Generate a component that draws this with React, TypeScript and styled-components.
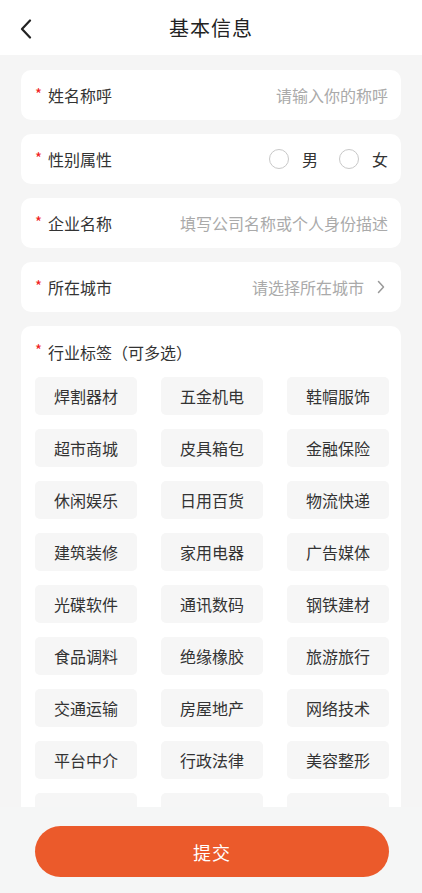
import React from "react";
import styled, { createGlobalStyle } from "styled-components";

const GlobalStyle = createGlobalStyle`
  html, body {
    margin: 0;
    padding: 0;
    background: #f5f5f5;
  }
  * {
    box-sizing: border-box;
  }
  body {
    font-family: "Noto Sans CJK SC", "Noto Sans", sans-serif;
  }
`;

const tags = [
  "焊割器材", "五金机电", "鞋帽服饰",
  "超市商城", "皮具箱包", "金融保险",
  "休闲娱乐", "日用百货", "物流快递",
  "建筑装修", "家用电器", "广告媒体",
  "光碟软件", "通讯数码", "钢铁建材",
  "食品调料", "绝缘橡胶", "旅游旅行",
  "交通运输", "房屋地产", "网络技术",
  "平台中介", "行政法律", "美容整形",
  "", "", "",
];

const Page = styled.div`
  display: flex;
  flex-direction: column;
  height: 893px;
  background: #f5f5f5;
`;

const Header = styled.header`
  position: relative;
  height: 55px;
  flex: none;
  display: flex;
  align-items: center;
  justify-content: center;
  background: #fff;
`;

const BackButton = styled.button`
  position: absolute;
  left: 14px;
  top: 17px;
  width: 24px;
  height: 24px;
  padding: 0;
  border: none;
  background: none;
  display: flex;
  align-items: center;
  justify-content: center;
`;

const Title = styled.h1`
  margin: 0;
  font-size: 20px;
  font-weight: 400;
  color: #222;
  letter-spacing: 1px;
`;

const Content = styled.main`
  flex: 1;
  overflow: hidden;
  padding: 15px 21px 0;
  display: flex;
  flex-direction: column;
  gap: 14px;
`;

const Card = styled.div`
  flex: none;
  background: #fff;
  border-radius: 10px;
`;

const Row = styled(Card)`
  height: 50px;
  padding: 0 13px 0 14px;
  display: flex;
  align-items: center;
  justify-content: space-between;
`;

const Label = styled.span`
  display: flex;
  align-items: center;
  font-size: 16px;
  color: #333;
`;

const Star = styled.span`
  color: #f02020;
  font-size: 15px;
  width: 13px;
  margin-top: -4px;
`;

const Placeholder = styled.span<{ $arrow?: boolean }>`
  display: flex;
  align-items: center;
  gap: 13px;
  font-size: 16px;
  color: #aaa;
  padding-right: ${(p) => (p.$arrow ? "3px" : "0")};
`;

const RadioGroup = styled.div`
  display: flex;
  align-items: center;
  gap: 21px;
`;

const Radio = styled.label`
  display: flex;
  align-items: center;
  gap: 13px;
  font-size: 16px;
  color: #333;
`;

const Circle = styled.span`
  width: 20px;
  height: 20px;
  border-radius: 50%;
  border: 1px solid #c8c8c8;
`;

const TagCard = styled(Card)`
  padding: 14px 14px 20px;
`;

const TagTitle = styled(Label)`
  line-height: 24px;
`;

const TagGrid = styled.div`
  margin-top: 13px;
  display: grid;
  grid-template-columns: repeat(3, 102px);
  column-gap: 24px;
  row-gap: 14px;
`;

const Tag = styled.div`
  height: 38px;
  border-radius: 5px;
  background: #f6f6f6;
  display: flex;
  align-items: center;
  justify-content: center;
  font-size: 16px;
  color: #333;
`;

const Footer = styled.footer`
  flex: none;
  height: 86px;
  padding: 19px 33px 0 35px;
  background: #f5f6f6;
`;

const Submit = styled.button`
  width: 100%;
  height: 51px;
  border: none;
  border-radius: 26px;
  background: #eb5a2b;
  color: #fff;
  font-family: inherit;
  font-size: 18px;
  letter-spacing: 1px;
`;

const Chevron = ({ dir }: { dir: "left" | "right" }) =>
  dir === "left" ? (
    <svg width="14" height="20" viewBox="0 0 14 20">
      <path d="M11 1.5 L3 10 L11 18.5" fill="none" stroke="#222" strokeWidth="2.2" strokeLinecap="round" strokeLinejoin="round" />
    </svg>
  ) : (
    <svg width="8" height="14" viewBox="0 0 8 14">
      <path d="M1.5 1.5 L6.5 7 L1.5 12.5" fill="none" stroke="#999" strokeWidth="1.5" strokeLinecap="round" strokeLinejoin="round" />
    </svg>
  );

const App: React.FC = () => {
  return (
    <Page>
      <GlobalStyle />
      <Header>
        <BackButton>
          <Chevron dir="left" />
        </BackButton>
        <Title>基本信息</Title>
      </Header>
      <Content>
        <Row>
          <Label><Star>*</Star>姓名称呼</Label>
          <Placeholder>请输入你的称呼</Placeholder>
        </Row>
        <Row>
          <Label><Star>*</Star>性别属性</Label>
          <RadioGroup>
            <Radio><Circle />男</Radio>
            <Radio><Circle />女</Radio>
          </RadioGroup>
        </Row>
        <Row>
          <Label><Star>*</Star>企业名称</Label>
          <Placeholder>填写公司名称或个人身份描述</Placeholder>
        </Row>
        <Row>
          <Label><Star>*</Star>所在城市</Label>
          <Placeholder $arrow>
            请选择所在城市
            <Chevron dir="right" />
          </Placeholder>
        </Row>
        <TagCard>
          <TagTitle><Star>*</Star>行业标签（可多选）</TagTitle>
          <TagGrid>
            {tags.map((t, i) => (
              <Tag key={i}>{t}</Tag>
            ))}
          </TagGrid>
        </TagCard>
      </Content>
      <Footer>
        <Submit>提交</Submit>
      </Footer>
    </Page>
  );
};

export default App;
